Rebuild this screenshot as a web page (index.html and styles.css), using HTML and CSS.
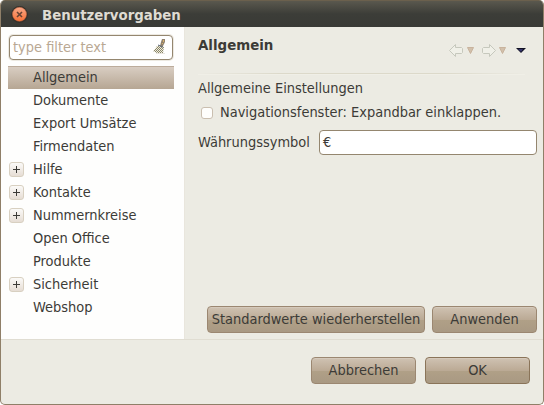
FILE: index.html
```html
<!DOCTYPE html>
<html lang="de">
<head>
<meta charset="utf-8">
<title>Benutzervorgaben</title>
<link rel="stylesheet" href="styles.css">
</head>
<body>
<div class="window">
  <header class="titlebar">
    <svg class="close" width="17" height="17" viewBox="0 0 17 17"><defs><linearGradient id="c" x2="0" y2="1"><stop stop-color="#f7a888"/><stop offset="1" stop-color="#fa7136"/></linearGradient></defs><circle cx="8.5" cy="8.5" r="8.4" fill="#34312c"/><circle cx="8.5" cy="8.3" r="7" fill="url(#c)" stroke="#c9663f" stroke-width=".5"/><path d="M6 6l5 5M11 6l-5 5" stroke="#684334" stroke-width="1.6"/></svg>
    <h1>Benutzervorgaben</h1>
  </header>
  <div class="body">
    <nav class="sidebar">
      <div class="filter"><span>type filter text</span>
        <svg class="broom" width="15" height="18" viewBox="0 0 15 18"><defs><pattern id="p" width="2" height="2" patternUnits="userSpaceOnUse"><path d="M0 0h1v1H0zM1 1h1v1H1z" fill="#85856d"/><path d="M1 0h1v1H1zM0 1h1v1H0z" fill="#f3edda"/></pattern></defs><path d="M4 15h9v1H4z" fill="#e9e5df"/><path d="M10 1h3v3l-2 4H8l1-4z" fill="#91826e"/><path d="M11 2h1v2h-1zM10 5h1v1h-1z" fill="#d5b06b"/><path d="M5 8h5l2 1-1 6H5l-4-2 2-2z" fill="url(#p)"/><path d="M6 7l5 2" stroke="#5b6475"/></svg>
      </div>
      <ul class="tree">
        <li class="selected"><i></i>Allgemein</li>
        <li><i></i>Dokumente</li>
        <li><i></i>Export Umsätze</li>
        <li><i></i>Firmendaten</li>
        <li><i class="plus"></i>Hilfe</li>
        <li><i class="plus"></i>Kontakte</li>
        <li><i class="plus"></i>Nummernkreise</li>
        <li><i></i>Open Office</li>
        <li><i></i>Produkte</li>
        <li><i class="plus"></i>Sicherheit</li>
        <li><i></i>Webshop</li>
      </ul>
    </nav>
    <main class="page">
      <div class="page-head">
        <h2>Allgemein</h2>
        <svg class="history" width="78" height="14" viewBox="0 0 78 14"><g fill="#f0f0e8" stroke="#c6c8bd"><path d="M.5 6.500l6-6v3h6l1 1v4l-1 1h-6v3z"/><path d="M46.500 6.500l-6-6v3h-6l-1 1v4l1 1h6v3z"/></g><path d="M18.500 3.500h6l-3 6zM50.500 3.500h6l-3 6z" fill="#d2c0ab" stroke="#c8b39d"/><path d="M67 4h10l-5 5z" fill="#111122"/><path d="M69 5h5l-2 3z" fill="#35356b"/></svg>
      </div>
      <div class="rule"></div>
      <p class="caption">Allgemeine Einstellungen</p>
      <label class="check"><i></i><span>Navigationsfenster: Expandbar einklappen.</span></label>
      <div class="field"><span>Währungssymbol</span><div class="input">€</div></div>
      <div class="actions"><button class="wide"><span>Standardwerte wiederherstellen</span></button><button>Anwenden</button></div>
    </main>
  </div>
  <footer class="footer"><button>Abbrechen</button><button class="default">OK</button></footer>
</div>
</body>
</html>
```
FILE: styles.css
```css
* { box-sizing: border-box; }
body {
  margin: 0;
  background: #fff;
  color: #3c3b37;
  font: 14.45px/23px "DejaVu Sans Condensed", "DejaVu Sans", sans-serif;
  font-stretch: condensed;
  white-space: nowrap;
}
h1, h2, p, ul { margin: 0; padding: 0; }
.window {
  display: flex;
  flex-direction: column;
  width: 544px;
  height: 405px;
  border: 1px solid #8f7f68;
  border-top: 0;
  border-radius: 5px;
  background: #ecebe3;
  overflow: hidden;
}
.titlebar {
  display: flex;
  align-items: center;
  height: 27px;
  padding-left: 10px;
  border-top: 1px solid #6b604d;
  background: linear-gradient(#5a584e, #3c3d38 50%, #393a36);
}
.titlebar h1 {
  margin-left: 14px;
  color: #dfdbd2;
  font-size: 14.8px;
  font-weight: bold;
}
.body { display: flex; height: 312px; }
.sidebar {
  width: 184px;
  padding: 8px 10px 0 7px;
  border-right: 1px solid #e9e6dd;
  background: #fefefd;
}
.filter {
  display: flex;
  align-items: center;
  justify-content: space-between;
  height: 25px;
  margin: 0 1px;
  padding: 0 5px 0 3px;
  border: 1px solid #94866f;
  border-radius: 4px;
  background: #fff;
  box-shadow: 0 0 0 1px #ece9e1;
  color: #b9a893;
}
.broom { margin-bottom: 1px; }
.tree { margin-top: 6px; list-style: none; }
.tree li { display: flex; align-items: center; height: 23px; }
.tree i { width: 15px; height: 15px; margin: 0 9px 0 1px; }
.tree .plus {
  border: 1px solid #d8d0c1;
  border-radius: 3px;
  background:
    linear-gradient(#3c3b37, #3c3b37) center / 7px 1px no-repeat,
    linear-gradient(#3c3b37, #3c3b37) center / 1px 7px no-repeat,
    linear-gradient(#fbfaf8, #e6ddd4);
}
.selected {
  background: linear-gradient(#dacfc4, #b6a693);
  box-shadow: inset 0 1px #bcac9b;
}
.page { width: 358px; padding: 0 6px 0 13px; }
.page-head { display: flex; justify-content: space-between; height: 46px; padding: 7px 10px 0 0; }
.page-head h2 { font-size: 14.9px; line-height: 23px; }
.history { margin-top: 10px; }
.rule { height: 2px; margin-right: 12px; background: linear-gradient(90deg, #ecebe3, #dcd9ca 25%, #dcd9ca 75%, #ecebe3); border-bottom: 1px solid #f0efe7; }
.caption { height: 23px; margin-top: 2px; }
.check { display: flex; align-items: center; height: 24px; }
.check i { width: 12px; height: 12px; margin: 1px 7px 0 3px; border: 1px solid #cabfb0; border-radius: 3px; background: #fefefc; }
.field { display: flex; justify-content: space-between; align-items: center; margin-top: 6px; }
.input { width: 218px; height: 25px; padding-left: 3px; border: 1px solid #94866f; border-radius: 4px; background: #fff; }
.actions { display: flex; justify-content: flex-end; gap: 7px; margin-top: 151px; }
button {
  width: 105px;
  height: 27px;
  padding: 0;
  border: 1px solid #9b8771;
  border-radius: 4px;
  background: linear-gradient(#cfc2b2, #bbaa95 50%, #b0a087 52%, #a99983);
  box-shadow: inset 0 1px #d5c9bb;
  color: inherit;
  font: inherit;
  line-height: 23px;
}
.wide { width: 218px; }
.footer { display: flex; justify-content: flex-end; gap: 9px; flex: 1; padding: 17px 13px 0 0; border-top: 1px solid #e0ddd2; }
.default { border-color: #8a7459; }
```
